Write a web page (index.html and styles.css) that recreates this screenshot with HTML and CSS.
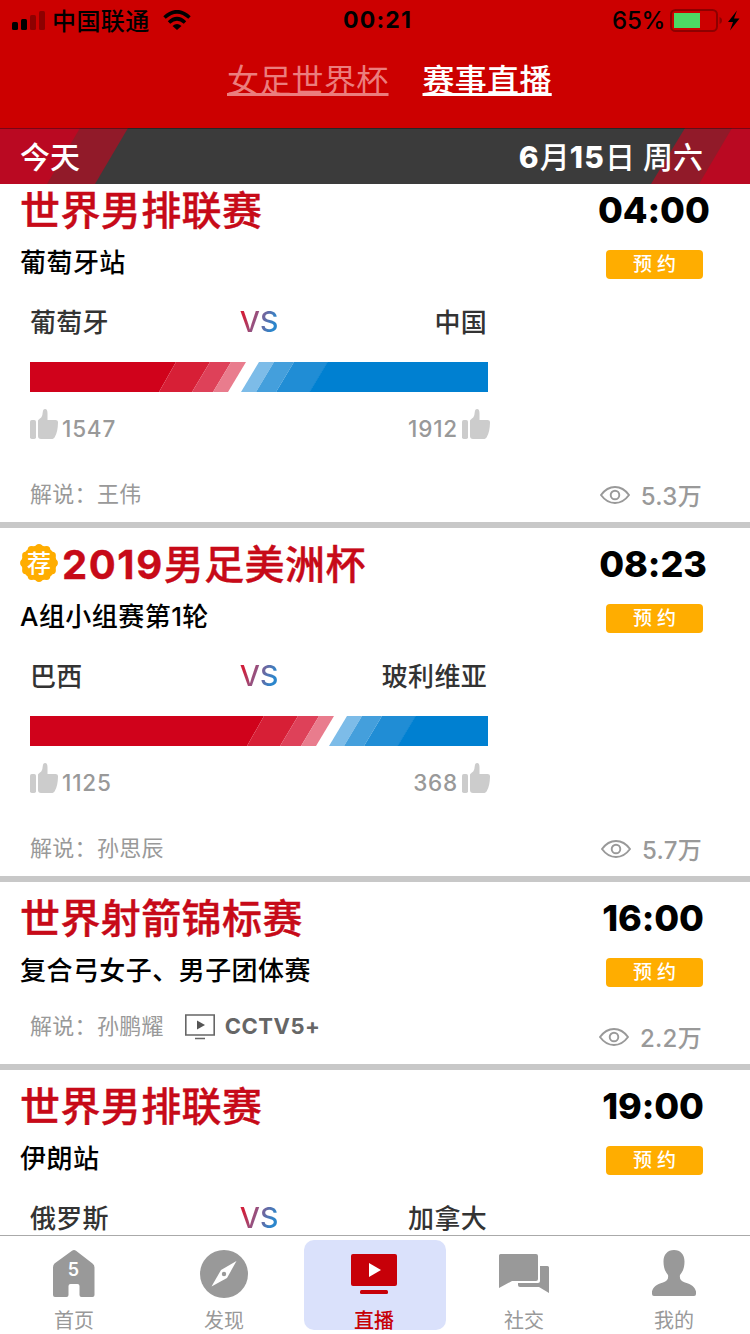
FILE: index.html
```html
<!DOCTYPE html>
<html lang="zh-CN">
<head>
<meta charset="utf-8">
<title>赛事直播</title>
<link rel="stylesheet" href="styles.css">
</head>
<body>
<svg class="defs" width="0" height="0">
  <symbol id="thumb" viewBox="0 0 28 30">
    <rect x="0" y="11" width="6" height="19" rx="1.800"/>
    <path d="M8 11.800c0-1.700 3.600-2 4.400-6C12.900 3 12.800 0 15 0c2 0 2.500 1.800 2.500 4.500V11h8c1.700 0 2.600 1 2.500 2.700-.2 6-1 10.500-3.200 14.300-.8 1.400-1.800 2-3.300 2H11c-2 0-3-1-3-3z"/>
  </symbol>
  <symbol id="eye" viewBox="0 0 30 18">
    <path d="M1 9C5 3.500 9.500 1 15 1s10 2.500 14 8c-4 5.500-8.500 8-14 8S5 14.500 1 9z"/>
    <circle cx="15" cy="9" r="4.300"/>
  </symbol>
  <symbol id="votes" viewBox="0 0 1000 30" overflow="visible">
    <path fill="#d0021b" d="M-500 0H-59l-17 30H-500z"/>
    <path fill="#d71f36" d="M-59 0h34l-18 30h-33z"/>
    <path fill="#de4159" d="M-25 0H-4l-18 30h-21z"/>
    <path fill="#e97c8d" d="M-4 0h15L-7 30h-15z"/>
    <path fill="#7dbce8" d="M24 0h15L21 30H6z"/>
    <path fill="#449fdc" d="M39 0h20L41 30H21z"/>
    <path fill="#208dd5" d="M59 0h34L75 30H41z"/>
    <path fill="#0080d1" d="M92.500 0H600v30H74.500z"/>
  </symbol>
</svg>
<div class="app">
  <header class="head">
    <div class="status">
      <svg class="signal" width="34" height="20" viewBox="0 0 34 20"><rect x="0" y="12" width="6" height="8" rx="1.500"/><rect x="9" y="9" width="6" height="11" rx="1.500"/><g opacity=".3"><rect x="18" y="5" width="6" height="15" rx="1.500"/><rect x="27" y="1" width="6" height="19" rx="1.500"/></g></svg>
      <span class="carrier">中国联通</span>
      <svg class="wifi" width="28" height="20" viewBox="0 0 28 20"><path d="M1.500 7.500Q14-4 26.500 7.500M6 12.500Q14 5 22 12.500" fill="none" stroke="#000" stroke-width="3.600"/><path d="M9.500 16Q14 12 18.500 16L14 20z"/></svg>
      <span class="clock">00:21</span>
      <span class="percent">65%</span>
      <svg class="battery" width="70" height="23" viewBox="0 0 70 23"><rect x="1" y="1" width="46" height="21" rx="4.500" fill="none" stroke="#8d0000" stroke-width="2"/><path d="M49.500 8c2 .7 2.500 2 2.500 3.500s-.5 2.800-2.500 3.500z" fill="#8d0000"/><path d="M4 4h26v15H4z" fill="#4cd964"/><path d="M67 1.500 58 13h5l-3 8.500L69.500 9.500H64z"/></svg>
    </div>
    <nav class="tabs"><a class="tab">女足世界杯</a><a class="tab on">赛事直播</a></nav>
  </header>
  <div class="date">
    <svg class="stripe" width="128" height="56"><path d="M0 0h128L95 56H0z" fill="#911a29"/><path d="M0 0h80L47 56H0z" fill="#ba0922"/></svg>
    <svg class="stripe right" width="99" height="56"><path d="M34 0h65v56H0z" fill="#911a29"/><path d="M81 0h18v56H48z" fill="#ba0922"/></svg>
    <span class="day">今天</span><span class="full"><b>6</b>月<b>15</b>日 周六</span>
  </div>
  <main class="list">
    <article class="card first">
      <div class="row title"><h2>世界男排联赛</h2><time>04:00</time></div>
      <div class="row sub"><p>葡萄牙站</p><button>预 约</button></div>
      <div class="teams"><span>葡萄牙</span><b>VS</b><span>中国</span></div>
      <svg class="bar" width="458" height="30"><use href="#votes" x="205" width="1000" height="30"/></svg>
      <div class="likes"><svg><use href="#thumb"/></svg><span>1547</span><i></i><span>1912</span><svg><use href="#thumb"/></svg></div>
      <div class="row foot"><p>解说：王伟</p><span class="views"><svg><use href="#eye"/></svg>5.3万</span></div>
    </article>
    <article class="card">
      <div class="row title"><svg class="badge" viewBox="0 0 38 38"><circle cx="19" cy="19" r="17.600"/><circle class="lobes" cx="19" cy="19" r="15.200" pathLength="12"/><text x="19" y="27.500">荐</text></svg><h2><b>2019</b>男足美洲杯</h2><time>08:23</time></div>
      <div class="row sub"><p>A组小组赛第1轮</p><button>预 约</button></div>
      <div class="teams"><span>巴西</span><b>VS</b><span>玻利维亚</span></div>
      <svg class="bar" width="458" height="30"><use href="#votes" x="293" width="1000" height="30"/></svg>
      <div class="likes"><svg><use href="#thumb"/></svg><span>1125</span><i></i><span>368</span><svg><use href="#thumb"/></svg></div>
      <div class="row foot"><p>解说：孙思辰</p><span class="views"><svg><use href="#eye"/></svg>5.7万</span></div>
    </article>
    <article class="card">
      <div class="row title"><h2>世界射箭锦标赛</h2><time>16:00</time></div>
      <div class="row sub"><p>复合弓女子、男子团体赛</p><button>预 约</button></div>
      <div class="row foot short"><p>解说：孙鹏耀</p><svg class="tv" width="30" height="26" viewBox="0 0 30 26"><path d="M.8 1h28.400v20H.8zM10 24.500h10" fill="none" stroke="#666" stroke-width="1.600"/><path d="M12 6.500v9l8-4.500z" fill="#555"/></svg><strong>CCTV5+</strong><span class="views"><svg><use href="#eye"/></svg>2.2万</span></div>
    </article>
    <article class="card">
      <div class="row title"><h2>世界男排联赛</h2><time>19:00</time></div>
      <div class="row sub"><p>伊朗站</p><button>预 约</button></div>
      <div class="teams"><span>俄罗斯</span><b>VS</b><span>加拿大</span></div>
    </article>
  </main>
  <footer class="dock">
    <a class="item"><svg width="50" height="50" viewBox="0 0 50 50"><path d="M5.500 14.500 23 1.800Q25 .2 27 1.800L43.500 14.500q2 1.500 2 4v27.500q0 2-2 2H32.500q-2 0-2-2V37q0-2-2-2h-7q-2 0-2 2v9q0 2-2 2H6q-2 0-2-2V18.500q0-2.500 1.500-4z"/><text x="24.500" y="26.500">5</text></svg>首页</a>
    <a class="item"><svg width="50" height="50" viewBox="0 0 50 50"><circle cx="25" cy="25" r="24"/><path d="M37.500 12 28 29 12.500 37.500 22 21z" fill="#fff"/><circle cx="25" cy="25" r="2.200"/></svg>发现</a>
    <a class="item on"><svg width="50" height="50" viewBox="0 0 50 50"><rect x="2" y="5" width="46" height="32" rx="2"/><rect x="11" y="41" width="28" height="4" rx="1.500"/><path d="M20 14v14l12-7z" fill="#fff"/></svg>直播</a>
    <a class="item"><svg width="50" height="50" viewBox="0 0 50 50"><path d="M1.500 5H37q2 0 2 2v23q0 2-2 2H13L0 39V6.500Q0 5 1.500 5zM41 17h7.500q1.500 0 1.500 1.500V44l-10-6H21q-2 0-2-2v-2h20q2 0 2-2z"/></svg>社交</a>
    <a class="item"><svg width="50" height="50" viewBox="0 0 50 50"><path d="M25 1c6.500 0 10.500 4.500 10.500 11.500 0 6-1.500 10-4.500 13.500-.7 4 1 6 5 7.500 6.500 2 10 4.500 11 9V45q0 2-2 2H5q-2 0-2-2v-2.500c1-4.500 4.500-7 11-9 4-1.500 5.700-3.500 5-7.500-3-3.500-4.500-7.500-4.500-13.500C14.500 5.500 18.500 1 25 1z"/></svg>我的</a>
  </footer>
</div>
</body>
</html>
```
FILE: styles.css
```css
* { box-sizing: border-box; margin: 0; padding: 0; }
body { font-family: Inter, "Noto Sans CJK SC", sans-serif; background: #fff; }
.defs { position: absolute; }
.app { display: flex; flex-direction: column; width: 750px; height: 1334px; overflow: hidden; }
svg { display: block; flex: none; }

.head { height: 128px; background: #c00; }
.status { display: flex; align-items: center; height: 40px; padding-left: 12px; font-size: 24px; }
.carrier { width: 98px; margin-left: 6px; padding-bottom: 2px; letter-spacing: .4px; font-weight: 500; }
.wifi { margin-left: 13px; }
.clock { width: 75px; margin-left: 152px; font-size: 23px; font-weight: 700; letter-spacing: 1.2px; }
.percent { width: 53px; margin-left: 194px; font-weight: 500; font-size: 24px; letter-spacing: -.2px; }
.battery { margin-left: 5px; }
.tabs { display: flex; gap: 34px; padding-left: 227px; }
.tab { height: 80px; line-height: 82px; font-size: 32px; letter-spacing: .3px; color: #eb7d7d; text-decoration: underline; text-decoration-thickness: 3px; text-underline-offset: 1px; text-decoration-skip-ink: none; }
.tab.on { color: #fff; font-weight: 500; }

.date { position: relative; display: flex; justify-content: space-between; align-items: center; height: 56px; padding: 0 47px 3px 20px; background: #3b3b3b; color: #fff; font-size: 30px; font-weight: 500; }
.date::before { content: ""; position: absolute; z-index: 1; left: 0; right: 0; top: 0; height: 1px; background: rgba(0, 0, 0, .35); }
.date span { position: relative; }
.date b { font-weight: 800; letter-spacing: 1.2px; }
.stripe { position: absolute; left: 0; top: 0; }
.stripe.right { left: auto; right: 0; }

.list { flex: 1; min-height: 0; overflow: hidden; }
.card { border-bottom: 6px solid #c8c8c8; }
.card.first { margin-top: -10px; }
.row { display: flex; align-items: center; }
.title { height: 72px; padding: 0 42px 0 20px; }
.title h2 { flex: 1; padding-top: 2px; font-size: 40px; font-weight: 500; letter-spacing: .4px; line-height: 70px; color: #c70a18; white-space: nowrap; -webkit-text-stroke: .4px #c70a18; }
.title h2 b { font-weight: 700; letter-spacing: 1.6px; }
.title time { font-size: 36px; font-weight: 800; letter-spacing: -.1px; line-height: 72px; text-align: center; width: 110px; white-space: nowrap; }
.badge { width: 38px; height: 38px; margin: 0 4px 2px 0; fill: #ffad00; }
.badge .lobes { fill: none; stroke: #ffad00; stroke-width: 7.400; stroke-linecap: round; stroke-dasharray: 0 1; }
.badge text { fill: #fff; font-size: 24px; font-weight: 500; text-anchor: middle; }
.sub { height: 36px; padding: 0 47px 0 20px; justify-content: space-between; }
.sub p { padding-bottom: 8px; font-size: 26px; font-weight: 500; letter-spacing: .45px; }
.sub button { width: 97px; height: 29px; border: 0; border-radius: 4px; background: #ffad00; color: #fff; font: 500 19px/29px Inter, "Noto Sans CJK SC", sans-serif; }
.teams { display: grid; grid-template-columns: 150px 1fr 150px; align-items: center; width: 458px; height: 80px; margin-left: 30px; font-size: 26px; font-weight: 500; color: #333; letter-spacing: .3px; }
.teams span { padding-bottom: 4px; }
.teams span:last-child { text-align: right; padding-right: 1px; }
.teams b { justify-self: center; padding-bottom: 2px; font-size: 28.500px; font-weight: 500; letter-spacing: 0; background: linear-gradient(110deg, #d0203c 15%, #8b5a8c 45%, #2b86cc 80%); background-clip: text; -webkit-background-clip: text; color: transparent; }
.bar { margin-left: 30px; overflow: hidden; }
.likes { display: flex; width: 460px; height: 72px; margin: 0 0 2px 30px; align-items: center; font-size: 22.500px; font-weight: 500; color: #999; letter-spacing: .8px; }
.likes svg { width: 28px; height: 30px; margin-bottom: 9px; fill: #ccc; }
.likes span { margin: 0 4px; }
.likes i { flex: 1; }
.foot { height: 56px; padding: 0 48px 0 30px; color: #999; font-size: 22px; letter-spacing: .3px; }
.foot p { padding-bottom: 4px; }
.foot strong { margin-left: 10px; padding-bottom: 2px; color: #666; font-weight: 700; font-size: 22px; letter-spacing: .5px; }
.tv { margin-left: 21px; }
.foot.short { height: 74px; }
.foot.short p { padding-bottom: 6px; }
.views { display: flex; align-items: center; margin-left: auto; font-size: 24px; font-weight: 500; }
.views svg { width: 30px; height: 18px; margin: 1px 11px 0 0; fill: none; stroke: #999; stroke-width: 1.900; }
.short .views { padding-top: 18px; }

.dock { display: flex; height: 99px; border-top: 1px solid #aaa; background: #fff; padding: 4px 0; }
.item { display: flex; flex-direction: column; align-items: center; width: 142px; margin: 0 4px; height: 90px; padding-top: 9px; padding-right: 2px; border-radius: 10px; color: #999; fill: #999; font-size: 20px; line-height: 24px; }
.item svg { margin-bottom: 10px; }
.item.on { color: #c70008; fill: #c70008; background: #dae1fb; font-weight: 500; }
.item text { fill: #fff; font-size: 18px; font-weight: 600; text-anchor: middle; }
```
